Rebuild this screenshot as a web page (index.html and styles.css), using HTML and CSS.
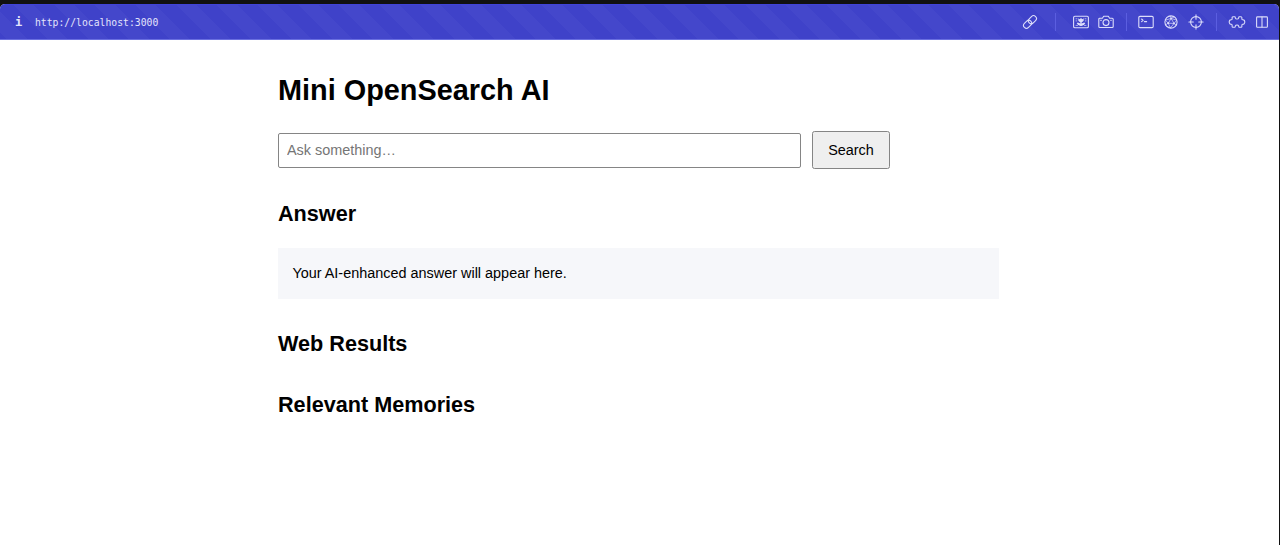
FILE: index.html
```html
<!DOCTYPE html>
<html lang="en">
<head>
    <meta charset="UTF-8">
    <meta name="viewport" content="width=device-width, initial-scale=1.0">
    <title>Mini OpenSearch AI</title>
    <link rel="stylesheet" href="styles.css">
</head>
<body>
<div class="window">
    <header class="toolbar">
        <span class="info">i</span>
        <span class="url">http://localhost:3000</span>

        <div class="tools">
            <svg class="icon link" width="16" height="16" viewBox="0 0 16 16">
                <rect x="5.9" y="2.8" width="9" height="5.8" rx="2.9" transform="rotate(-45 10.4 5.7)"/>
                <rect x="1.1" y="7.4" width="9" height="5.8" rx="2.9" transform="rotate(-45 5.6 10.3)"/>
            </svg>
            <span class="divider"></span>
            <svg class="icon picture" width="16" height="16" viewBox="0 0 16 16">
                <rect x=".6" y="2.3" width="14.8" height="11.4" rx="1.3"/>
                <path class="fill" d="M5.3 4.3l1.3 1L8 4l1.4 1.3 1.3-1v2.5L8.6 8.5v.9l2.6-1 1.1.8-1.5 1.8-2.3.9h-1L5.2 11 3.7 9.2l1.1-.8 2.6 1v-.9L5.3 6.8z"/>
                <path class="dots" d="M3 4.8h1M12 4.8h1M3 6.9h.8M12.2 6.9h.8M3 11.4h1.6M11.4 11.4H13"/>
            </svg>
            <svg class="icon camera" width="16" height="16" viewBox="0 0 16 16">
                <path d="M1.8 4.2h2.6l1.3-1.9h4.6l1.3 1.9h2.6a1 1 0 0 1 1 1v7.3a1 1 0 0 1-1 1H1.8a1 1 0 0 1-1-1V5.2a1 1 0 0 1 1-1z"/>
                <circle cx="8" cy="8.6" r="3"/>
                <path d="M2.6 6.3h.8M12.7 6.3h.6"/>
            </svg>
            <span class="divider"></span>
            <svg class="icon terminal" width="16" height="16" viewBox="0 0 16 16">
                <rect x=".8" y="2.4" width="14.4" height="11.2" rx="1.2"/>
                <path d="M3.6 5l1.5 1.3-1.5 1.3M6.4 7.6h2.2"/>
            </svg>
            <svg class="icon network" width="16" height="16" viewBox="0 0 16 16">
                <circle cx="8" cy="8" r="6.1"/>
                <path class="web" d="M2.4 6l5.8-1.5L13.5 6M8.2 4.5L7.2 2M8.2 4.5l3-1.7M8.2 4.5L5.2 9.2 2.4 6M5.2 9.2l5.8.2L8.2 4.5M11 9.4l2.7-3M5.2 9.2l-2.6 1.6M5.2 9.2l2.3 4.7L11 9.4l2.2 1.8M3.8 12.3l3.7 1.6"/>
                <circle class="fill" cx="8.2" cy="4.5" r=".9"/>
                <circle class="fill" cx="5.2" cy="9.2" r=".9"/>
                <circle class="fill" cx="11" cy="9.4" r=".9"/>
            </svg>
            <svg class="icon target" width="16" height="16" viewBox="0 0 16 16">
                <circle cx="8" cy="8" r="5.4"/>
                <path d="M8 .9v4.4M8 10.7v4.4M.9 8h4.4M10.7 8h4.4"/>
            </svg>
            <span class="divider"></span>
            <svg class="icon puzzle" width="18" height="16" viewBox="0 0 18 16">
                <path d="M5 2.7h1.7c.8 0 .5.7.7 1.4.4 1.2 2.8 1.2 3.2 0 .2-.7-.1-1.4.7-1.4H13c.7 0 .9.5.9 1.1 0 .7-.3 1.5.3 1.8.5.2 1.1-.1 1.7.4 1.2 1 1.2 3 0 4-.6.5-1.2.2-1.7.4-.6.3-.3 1.1-.3 1.8 0 .6-.2 1.1-.9 1.1h-1.7c-.8 0-.5-.7-.7-1.4-.4-1.2-2.8-1.2-3.2 0-.2.7.1 1.4-.7 1.4H5c-.7 0-.9-.5-.9-1.1 0-.7.3-1.5-.3-1.8-.5-.2-1.1.1-1.7-.4-1.2-1-1.2-3 0-4 .6-.5 1.2-.2 1.7-.4.6-.3.3-1.1.3-1.8 0-.6.2-1.1.9-1.1z"/>
            </svg>
            <svg class="icon split" width="14" height="16" viewBox="0 0 14 16">
                <rect x="1.6" y="2.9" width="10.8" height="10.3" rx=".8"/>
                <path d="M7 3v10"/>
            </svg>
        </div>
    </header>

    <main class="container">
        <h1>Mini OpenSearch AI</h1>

        <form class="search-bar">
            <input type="text" placeholder="Ask something…">
            <button type="button">Search</button>
        </form>

        <h2>Answer</h2>
        <div class="answer">Your AI-enhanced answer will appear here.</div>

        <h2>Web Results</h2>
        <div class="results"></div>

        <h2>Relevant Memories</h2>
        <div class="results"></div>
    </main>
</div>
</body>
</html>
```
FILE: styles.css
```css
* {
    box-sizing: border-box;
}
body {
    margin: 0;
    background-color: #111;
    font-family: "Liberation Sans", Arial, sans-serif;
    font-size: 14.43px;
    color: #000;
}
.window {
    height: 541px;
    margin: 4px 1px 0 0;
    background-color: #fff;
    border-radius: 5px 5px 0 0;
    overflow: hidden;
}
.toolbar {
    display: flex;
    align-items: center;
    height: 36px;
    padding: 0 10px 0 15px;
    border-top: 1px solid #4043d8;
    border-bottom: 1px solid #6a6fe0;
    background: repeating-linear-gradient(45deg, #3f42c9 0, #3f42c9 4.9px, #4447cb 4.9px, #4447cb 19.3px, #3f42c9 19.3px, #3f42c9 28.74px);
    color: #e3e4fb;
    font-family: "DejaVu Sans Mono", monospace;
    font-size: 9.75px;
}
.info {
    width: 20px;
    font-size: 12px;
    font-weight: bold;
}
.tools {
    display: flex;
    align-items: center;
    margin-left: auto;
}
.icon {
    fill: none;
    stroke: #dcddfa;
    stroke-width: 1.1;
    stroke-linecap: round;
    stroke-linejoin: round;
}
.icon .fill {
    fill: #dcddfa;
    stroke: none;
}
.icon .dots,
.icon .web {
    stroke-width: 0.7;
}
.divider {
    width: 1px;
    height: 18px;
    background-color: #5b5ee0;
}
.link {
    margin-right: 17px;
}
.picture {
    margin-left: 17px;
    margin-right: 9px;
}
.camera {
    margin-right: 12px;
}
.terminal {
    margin-left: 11px;
}
.network,
.target {
    margin-left: 9px;
}
.target {
    margin-right: 12px;
}
.puzzle {
    margin-left: 11px;
    margin-right: 9px;
}
.container {
    width: 721px;
    margin-left: 278px;
    padding-top: 34px;
}
h1 {
    margin: 0 0 24px;
    font-size: 28.86px;
    line-height: 33px;
}
h2 {
    margin: 32px 0 21px;
    font-size: 21.64px;
    line-height: 26px;
}
.search-bar {
    display: flex;
    align-items: center;
    gap: 11px;
}
.search-bar input {
    width: 523px;
    height: 35px;
    padding: 0 8px;
    border: 1px solid #858585;
    border-radius: 2px;
    font: inherit;
}
.search-bar input::placeholder {
    color: #757575;
}
.search-bar button {
    width: 78px;
    height: 38px;
    padding: 0;
    border: 1px solid #858585;
    border-radius: 2.5px;
    background-color: #efefef;
    color: #000;
    font: inherit;
}
.answer {
    height: 51px;
    padding: 0 14.4px;
    background-color: #f6f7fa;
    line-height: 51px;
}
.results + h2 {
    margin-top: 35px;
}
```
